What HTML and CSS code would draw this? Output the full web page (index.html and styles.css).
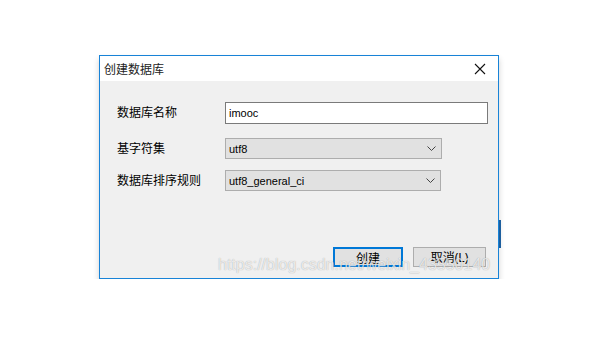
FILE: index.html
```html
<!DOCTYPE html>
<html lang="zh-CN">
  <head>
    <meta charset="UTF-8" />
    <title>创建数据库</title>
    <link rel="stylesheet" href="styles.css">
  </head>
  <body>
    <div class="stage">
      <div class="dialog">
        <div class="title-bar">
          <span class="title">创建数据库</span>
          <svg class="close" width="12" height="12" viewBox="0 0 12 12">
            <path d="M1 1L11 11M11 1L1 11" stroke="#111" stroke-width="1.1" fill="none" />
          </svg>
        </div>
        <div class="dialog-body">
          <div class="form">
            <label class="row-name">数据库名称</label>
            <div class="text-input row-name">imooc</div>

            <label class="row-charset">基字符集</label>
            <div class="select row-charset">
              <span>utf8</span>
              <svg width="9" height="5" viewBox="0 0 9 5"><path d="M0.5 0.5L4.5 4.5L8.5 0.5" stroke="#444" fill="none" /></svg>
            </div>

            <label class="row-collation">数据库排序规则</label>
            <div class="select row-collation short">
              <span>utf8_general_ci</span>
              <svg width="9" height="5" viewBox="0 0 9 5"><path d="M0.5 0.5L4.5 4.5L8.5 0.5" stroke="#444" fill="none" /></svg>
            </div>
          </div>
          <div class="actions">
            <button class="btn primary">创建</button>
            <button class="btn">取消(L)</button>
          </div>
        </div>
        <div class="watermark">https://blog.csdn.net/weixin_43550140</div>
        <div class="edge"></div>
      </div>
    </div>
  </body>
</html>
```

FILE: styles.css
```css
body {
  margin: 0;
  background-color: #fff;
  font-family: "Noto Sans", "Noto Sans CJK SC", sans-serif;
  font-size: 12px;
  color: #000;
}
.stage {
  padding: 55px 0 0 99px;
}
.dialog {
  position: relative;
  width: 398px;
  height: 222px;
  border: 1px solid #1883d7;
  box-shadow: 0 4px 6px rgba(0, 0, 0, 0.18);
  display: flex;
  flex-direction: column;
}
.title-bar {
  height: 25px;
  background-color: #fff;
  display: flex;
  align-items: center;
  justify-content: space-between;
  padding: 0 12px 0 4px;
}
.title {
  font-size: 12px;
  color: #222;
}
.dialog-body {
  flex: 1;
  background-color: #f0f0f0;
  display: flex;
  flex-direction: column;
  padding: 21px 12px 11px 17px;
}
.form {
  display: grid;
  grid-template-columns: 108px 1fr;
  align-items: center;
}
.form label {
  line-height: 16px;
}
.text-input,
.select span {
  font-family: "Liberation Sans", "Noto Sans CJK SC", sans-serif;
  font-size: 11px;
}
.text-input {
  height: 20px;
  line-height: 20px;
  border: 1px solid #7a7a7a;
  background-color: #fff;
  padding: 0 3px;
  margin-right: -2px;
}
.select {
  height: 19px;
  width: 207px;
  border: 1px solid #adadad;
  background-color: #e1e1e1;
  display: flex;
  align-items: center;
  justify-content: space-between;
  padding: 0 5px 0 3px;
  box-sizing: content-box;
}
.select.short {
  width: 206px;
}
.select.row-charset {
  margin-top: 14px;
}
.select.row-collation {
  margin-top: 11px;
}
label.row-charset {
  margin-top: 14px;
}
label.row-collation {
  margin-top: 11px;
}
.actions {
  margin-top: auto;
  display: flex;
  justify-content: flex-end;
  gap: 10px;
}
.btn {
  font-family: inherit;
  font-size: 12px;
  color: #000;
  height: 20px;
  padding: 0;
  background-color: #e1e1e1;
  border: 1px solid #adadad;
  border-radius: 0;
  width: 73px;
}
.btn.primary {
  width: 70px;
  border: 2px solid #0078d7;
}
.watermark {
  position: absolute;
  left: 118px;
  top: 200px;
  font-family: "Liberation Sans", Arial, sans-serif;
  font-size: 16px;
  color: rgba(255, 255, 255, 0.75);
  text-shadow: 0 0 1px rgba(0, 0, 0, 0.35);
  white-space: nowrap;
}
.edge {
  position: absolute;
  left: 399px;
  top: 164px;
  width: 2px;
  height: 28px;
  background-color: #1d5f9e;
}
```
